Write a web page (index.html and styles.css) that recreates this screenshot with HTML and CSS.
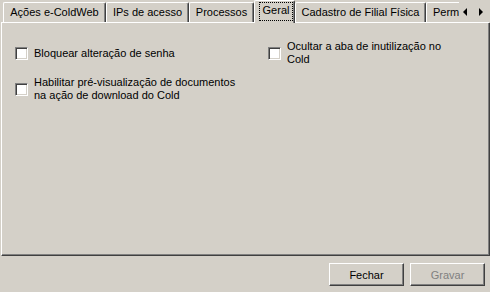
FILE: index.html
```html
<!DOCTYPE html>
<html lang="pt-BR">
<head>
<meta charset="utf-8">
<title>Configurações</title>
<link rel="stylesheet" href="styles.css">
</head>
<body>
<div class="window">
  <div class="tabs-row">
    <div class="tabs">
      <div class="tab t1">Ações e-ColdWeb</div>
      <div class="tab t2">IPs de acesso</div>
      <div class="tab t3">Processos</div>
      <div class="tab active t4"><span class="focus">Geral</span></div>
      <div class="tab t5">Cadastro de Filial Física</div>
      <div class="tab t6">Permissões</div>
    </div>
    <div class="scroller">
      <span class="arrow left"></span>
      <span class="arrow right"></span>
    </div>
  </div>
  <div class="panel">
    <div class="options">
      <label class="option"><span class="box"></span><span class="text">Bloquear alteração de senha</span></label>
      <label class="option"><span class="box"></span><span class="text">Ocultar a aba de inutilização no<br>Cold</span></label>
      <label class="option"><span class="box"></span><span class="text">Habilitar pré-visualização de documentos<br>na ação de download do Cold</span></label>
    </div>
  </div>
  <div class="footer">
    <button class="btn" type="button">Fechar</button>
    <button class="btn" type="button" disabled>Gravar</button>
  </div>
</div>
</body>
</html>
```
FILE: styles.css
```css
html, body {
  margin: 0;
  padding: 0;
}
body {
  background: #d4d0c8;
  color: #000;
  font-family: "Liberation Sans", Arial, sans-serif;
  font-size: 11px;
}
.window {
  width: 490px;
  height: 292px;
  display: flex;
  flex-direction: column;
  overflow: hidden;
}
.tabs-row {
  display: flex;
  height: 23px;
  margin-left: 1px;
  width: 488px;
  background: linear-gradient(to top, #fff 1px, transparent 1px);
}
.tabs {
  flex: 1;
  display: flex;
  align-items: flex-end;
  overflow: hidden;
  padding-left: 2px;
}
.tab {
  flex: none;
  box-sizing: border-box;
  height: 20px;
  margin-bottom: 1px;
  border: 1px solid #fff;
  border-bottom: 0;
  border-right-color: #404040;
  border-radius: 2px 2px 0 0;
  box-shadow: inset -1px 0 #808080;
  line-height: 18px;
  text-align: center;
  white-space: nowrap;
  background: #d4d0c8;
}
.t1 { width: 103px; }
.t2 { width: 83px; }
.t3 { width: 65px; }
.t4 { width: 41px; }
.t5 { width: 131px; }
.t6 { width: 80px; text-align: left; padding-left: 6px; }
.tab.active {
  height: 23px;
  margin-bottom: 0;
  position: relative;
}
.focus {
  display: block;
  box-sizing: border-box;
  height: 19px;
  margin: 1px 1px 0 4px;
  border: 1px dotted #000;
  line-height: 15px;
  text-align: center;
}
.scroller {
  flex: none;
  width: 30px;
  display: flex;
  align-items: flex-start;
  padding-top: 8px;
  box-sizing: border-box;
}
.arrow {
  width: 0;
  height: 0;
  border-top: 4px solid transparent;
  border-bottom: 4px solid transparent;
}
.arrow.left {
  margin-left: 4px;
  border-right: 4px solid #000;
}
.arrow.right {
  margin-left: 12px;
  border-left: 4px solid #000;
}
.panel {
  flex: none;
  box-sizing: border-box;
  margin-left: 1px;
  width: 489px;
  height: 233px;
  border-left: 1px solid #fff;
  border-right: 1px solid #404040;
  border-bottom: 1px solid #404040;
  box-shadow: inset -1px -1px #808080;
}
.options {
  display: grid;
  grid-template-columns: 253px auto;
  row-gap: 10px;
  align-items: center;
  padding: 17px 0 0 13px;
}
.option {
  display: flex;
  align-items: center;
  gap: 6px;
}
.box {
  flex: none;
  box-sizing: border-box;
  width: 13px;
  height: 13px;
  background: #fff;
  border: 1px solid;
  border-color: #808080 #fff #fff #808080;
  box-shadow: inset 1px 1px #404040, inset -1px -1px #d4d0c8;
}
.text {
  line-height: 13px;
  white-space: nowrap;
}
.footer {
  flex: 1;
  display: flex;
  justify-content: flex-end;
  align-items: flex-start;
  gap: 6px;
  padding: 7px 5px 0 0;
}
.btn {
  box-sizing: border-box;
  width: 75px;
  height: 23px;
  padding: 0;
  margin: 0;
  background: #d4d0c8;
  border: 1px solid;
  border-color: #fff #404040 #404040 #fff;
  box-shadow: inset -1px -1px #808080;
  border-radius: 0;
  font-family: inherit;
  font-size: 11px;
  color: #000;
}
.btn:disabled {
  color: #808080;
}
```
